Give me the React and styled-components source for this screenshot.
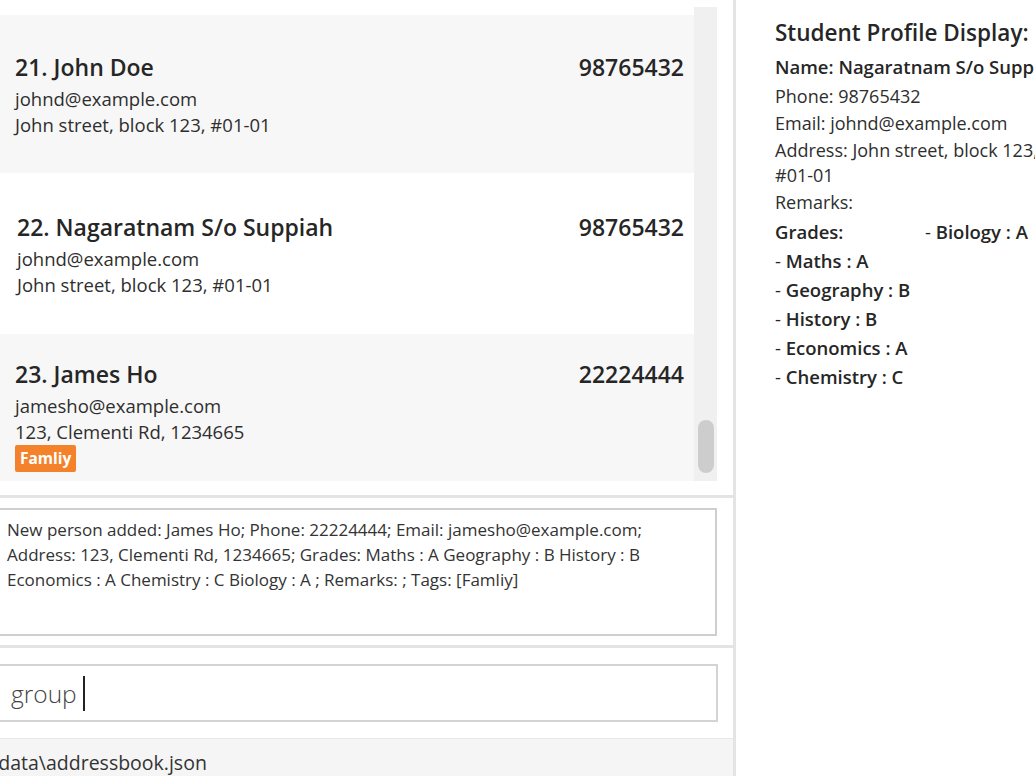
import styled, { createGlobalStyle } from "styled-components";

const GlobalStyle = createGlobalStyle`
  html, body {
    margin: 0;
    padding: 0;
    background: #fff;
    overflow: hidden;
  }

  body {
    font-family: "Open Sans", "Noto Sans", sans-serif;
    color: #333;
  }
`;

const persons = [
  {
    id: 21,
    name: "John Doe",
    phone: "98765432",
    email: "johnd@example.com",
    address: "John street, block 123, #01-01",
    tags: [],
    shade: true,
    height: 158,
  },
  {
    id: 22,
    name: "Nagaratnam S/o Suppiah",
    phone: "98765432",
    email: "johnd@example.com",
    address: "John street, block 123, #01-01",
    tags: [],
    shade: false,
    height: 161,
    indent: 2,
  },
  {
    id: 23,
    name: "James Ho",
    phone: "22224444",
    email: "jamesho@example.com",
    address: "123, Clementi Rd, 1234665",
    tags: ["Famliy"],
    shade: true,
    height: 160,
  },
];

const grades = [
  ["Maths", "A"],
  ["Geography", "B"],
  ["History", "B"],
  ["Economics", "A"],
  ["Chemistry", "C"],
];

const resultText =
  "New person added: James Ho; Phone: 22224444; Email: jamesho@example.com;\n" +
  "Address: 123, Clementi Rd, 1234665; Grades: Maths : A Geography : B History : B\n" +
  "Economics : A Chemistry : C Biology : A ; Remarks: ; Tags: [Famliy]";

function PersonCard({ person }) {
  return (
    <Card $shade={person.shade} $height={person.height} $indent={person.indent}>
      <CardHead>
        <CardName>
          {person.id}. {person.name}
        </CardName>
        <CardPhone>{person.phone}</CardPhone>
      </CardHead>
      <CardLine>{person.email}</CardLine>
      <CardLine>{person.address}</CardLine>
      {person.tags.length > 0 && (
        <TagRow>
          {person.tags.map((t) => (
            <Tag key={t}>{t}</Tag>
          ))}
        </TagRow>
      )}
    </Card>
  );
}

export default function App() {
  return (
    <>
      <GlobalStyle />
      <Window>
        <LeftPane>
          <ListSection>
            <ListViewport>
              <CardColumn>
                <CardTail />
                {persons.map((p) => (
                  <PersonCard key={p.id} person={p} />
                ))}
              </CardColumn>
              <ScrollTrack>
                <ScrollThumb />
              </ScrollTrack>
            </ListViewport>
          </ListSection>

          <ResultSection>
            <ResultBox>{resultText}</ResultBox>
          </ResultSection>

          <CommandSection>
            <CommandBox>
              <CommandText>group</CommandText>
              <Caret />
            </CommandBox>
          </CommandSection>

          <StatusBar>
            <StatusText>.\data\addressbook.json</StatusText>
          </StatusBar>
        </LeftPane>

        <ProfilePane>
          <ProfileTitle>Student Profile Display:</ProfileTitle>
          <ProfileName>Name: Nagaratnam S/o Suppiah</ProfileName>
          <ProfileField>Phone: 98765432</ProfileField>
          <ProfileField>Email: johnd@example.com</ProfileField>
          <ProfileField $width={270}>Address: John street, block 123, #01-01</ProfileField>
          <ProfileField>Remarks:</ProfileField>
          <GradesHead>
            <GradeLabel>Grades:</GradeLabel>
            <GradeItem>
              <span>- </span>Biology : A
            </GradeItem>
          </GradesHead>
          {grades.map(([subject, grade]) => (
            <GradeItem key={subject}>
              <span>- </span>
              {subject} : {grade}
            </GradeItem>
          ))}
        </ProfilePane>
      </Window>
    </>
  );
}

const Window = styled.div`
  display: flex;
  width: 1035px;
  height: 776px;
  overflow: hidden;
`;

const LeftPane = styled.div`
  display: flex;
  flex-direction: column;
  flex: 0 0 733px;
  height: 100%;
  border-right: 3px solid #e4e4e4;
  overflow: hidden;
`;

const ListSection = styled.section`
  flex-shrink: 0;
  height: 474px;
  padding: 7px 16px 14px 0;
  border-bottom: 3px solid #e4e4e4;
`;

const ListViewport = styled.div`
  display: flex;
  height: 100%;
  overflow: hidden;
`;

const CardColumn = styled.div`
  flex: 1;
  overflow: hidden;
`;

const CardTail = styled.div`
  height: 8px;
  background: #fff;
`;

const Card = styled.div`
  display: flex;
  flex-direction: column;
  justify-content: center;
  height: ${(p) => p.$height}px;
  padding: 2px 10px 0 ${(p) => 15 + (p.$indent || 0)}px;
  box-sizing: border-box;
  background: ${(p) => (p.$shade ? "#f7f7f7" : "#fff")};
`;

const CardHead = styled.div`
  display: flex;
  justify-content: space-between;
  align-items: baseline;
  margin-bottom: 4px;
`;

const CardName = styled.h3`
  margin: 0;
  font-size: 23px;
  line-height: 30px;
  font-weight: 600;
  color: #262626;
`;

const CardPhone = styled.span`
  font-size: 23px;
  line-height: 30px;
  font-weight: 600;
  color: #262626;
`;

const CardLine = styled.div`
  font-size: 18.5px;
  line-height: 26px;
  color: #2e2e2e;
`;

const TagRow = styled.div`
  display: flex;
  gap: 6px;
`;

const Tag = styled.span`
  display: inline-block;
  padding: 0 5px;
  height: 27px;
  line-height: 27px;
  border-radius: 2px;
  background: #f4822a;
  font-size: 15.5px;
  font-weight: 700;
  color: #fff;
`;

const ScrollTrack = styled.div`
  display: flex;
  flex-direction: column;
  flex: 0 0 23px;
  padding: 413px 3px 0 4px;
  box-sizing: border-box;
  background: #f0f0f0;
`;

const ScrollThumb = styled.div`
  height: 53px;
  border-radius: 8px;
  background: #cdcdcd;
`;

const ResultSection = styled.section`
  flex-shrink: 0;
  height: 137px;
  padding: 10px 16px 0 0;
  border-bottom: 3px solid #e4e4e4;
`;

const ResultBox = styled.div`
  height: 128px;
  margin-left: -10px;
  padding: 7px 10px 0 15px;
  box-sizing: border-box;
  border: 2px solid #cfcfcf;
  font-size: 17px;
  line-height: 25px;
  color: #333;
  white-space: pre-line;
`;

const CommandSection = styled.section`
  flex-shrink: 0;
  height: 90px;
  padding: 16px 15px 0 0;
  box-sizing: border-box;
`;

const CommandBox = styled.div`
  display: flex;
  align-items: center;
  height: 58px;
  margin-left: -10px;
  padding-left: 19px;
  box-sizing: border-box;
  border: 2px solid #d4d4d4;
`;

const CommandText = styled.span`
  font-size: 24.5px;
  font-weight: 300;
  color: #444;
  line-height: 30px;
  margin-top: 2px;
`;

const Caret = styled.span`
  display: inline-block;
  width: 2px;
  height: 35px;
  margin-left: 6px;
  background: #222;
`;

const StatusBar = styled.footer`
  flex: 1;
  display: flex;
  align-items: center;
  padding-top: 10px;
  background: #f5f5f5;
  border-top: 1px solid #e8e8e8;
`;

const StatusText = styled.span`
  margin-left: -14px;
  font-size: 19.5px;
  color: #333;
  white-space: nowrap;
`;

const ProfilePane = styled.aside`
  flex: 1;
  display: flex;
  flex-direction: column;
  padding: 19px 0 0 39px;
  overflow: hidden;
  background: #fff;
`;

const ProfileTitle = styled.h2`
  margin: 0;
  font-size: 22.5px;
  line-height: 28px;
  font-weight: 600;
  color: #262626;
  white-space: nowrap;
`;

const ProfileName = styled.div`
  margin: 7px 0 5px;
  font-size: 18.5px;
  line-height: 25px;
  font-weight: 600;
  color: #262626;
  white-space: nowrap;
`;

const ProfileField = styled.div`
  width: ${(p) => (p.$width ? `${p.$width}px` : "auto")};
  margin-bottom: 2px;
  font-size: 18px;
  line-height: 25px;
  color: #2e2e2e;
`;

const GradesHead = styled.div`
  display: grid;
  grid-template-columns: 150px auto;
  white-space: nowrap;
`;

const GradeLabel = styled.span`
  font-size: 18.5px;
  line-height: 29px;
  font-weight: 600;
  color: #262626;
`;

const GradeItem = styled.div`
  font-size: 18.5px;
  line-height: 29px;
  font-weight: 600;
  color: #262626;
  white-space: nowrap;

  span {
    font-weight: 400;
  }
`;
